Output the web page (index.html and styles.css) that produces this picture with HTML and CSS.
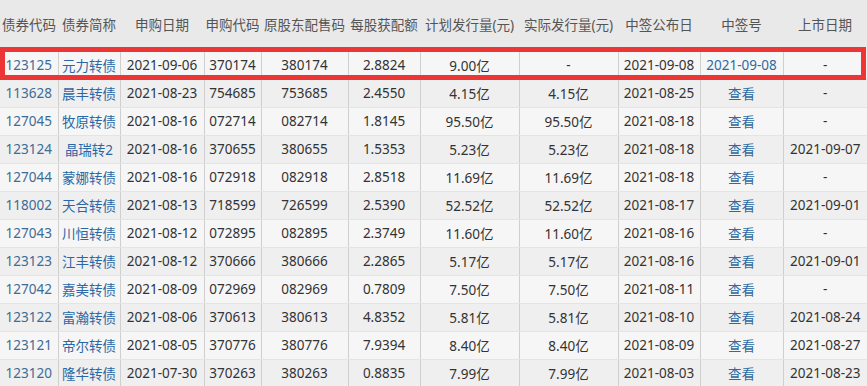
FILE: index.html
```html
<!DOCTYPE html>
<html lang="zh">
<head>
<meta charset="utf-8">
<title>可转债申购</title>
<link rel="stylesheet" href="styles.css">
</head>
<body>
<div class="wrap">
<table class="bonds">
<colgroup>
<col class="c1"><col class="c2"><col class="c3"><col class="c4"><col class="c5"><col class="c6"><col class="c7"><col class="c8"><col class="c9"><col class="c10"><col class="c11">
</colgroup>
<thead>
<tr><th>债券代码</th><th>债券简称</th><th>申购日期</th><th>申购代码</th><th>原股东配售码</th><th>每股获配额</th><th>计划发行量(元)</th><th>实际发行量(元)</th><th>中签公布日</th><th>中签号</th><th>上市日期</th></tr>
</thead>
<tbody>
<tr><td class="code">123125</td><td class="name">元力转债</td><td>2021-09-06</td><td>370174</td><td>380174</td><td>2.8824</td><td>9.00亿</td><td>-</td><td>2021-09-08</td><td class="link">2021-09-08</td><td>-</td></tr>
<tr><td class="code">113628</td><td class="name">晨丰转债</td><td>2021-08-23</td><td>754685</td><td>753685</td><td>2.4550</td><td>4.15亿</td><td>4.15亿</td><td>2021-08-25</td><td class="link">查看</td><td>-</td></tr>
<tr><td class="code">127045</td><td class="name">牧原转债</td><td>2021-08-16</td><td>072714</td><td>082714</td><td>1.8145</td><td>95.50亿</td><td>95.50亿</td><td>2021-08-18</td><td class="link">查看</td><td>-</td></tr>
<tr><td class="code">123124</td><td class="name">晶瑞转2</td><td>2021-08-16</td><td>370655</td><td>380655</td><td>1.5353</td><td>5.23亿</td><td>5.23亿</td><td>2021-08-18</td><td class="link">查看</td><td>2021-09-07</td></tr>
<tr><td class="code">127044</td><td class="name">蒙娜转债</td><td>2021-08-16</td><td>072918</td><td>082918</td><td>2.8518</td><td>11.69亿</td><td>11.69亿</td><td>2021-08-18</td><td class="link">查看</td><td>-</td></tr>
<tr><td class="code">118002</td><td class="name">天合转债</td><td>2021-08-13</td><td>718599</td><td>726599</td><td>2.5390</td><td>52.52亿</td><td>52.52亿</td><td>2021-08-17</td><td class="link">查看</td><td>2021-09-01</td></tr>
<tr><td class="code">127043</td><td class="name">川恒转债</td><td>2021-08-12</td><td>072895</td><td>082895</td><td>2.3749</td><td>11.60亿</td><td>11.60亿</td><td>2021-08-16</td><td class="link">查看</td><td>-</td></tr>
<tr><td class="code">123123</td><td class="name">江丰转债</td><td>2021-08-12</td><td>370666</td><td>380666</td><td>2.2865</td><td>5.17亿</td><td>5.17亿</td><td>2021-08-16</td><td class="link">查看</td><td>2021-09-01</td></tr>
<tr><td class="code">127042</td><td class="name">嘉美转债</td><td>2021-08-09</td><td>072969</td><td>082969</td><td>0.7809</td><td>7.50亿</td><td>7.50亿</td><td>2021-08-11</td><td class="link">查看</td><td>-</td></tr>
<tr><td class="code">123122</td><td class="name">富瀚转债</td><td>2021-08-06</td><td>370613</td><td>380613</td><td>4.8352</td><td>5.81亿</td><td>5.81亿</td><td>2021-08-10</td><td class="link">查看</td><td>2021-08-24</td></tr>
<tr><td class="code">123121</td><td class="name">帝尔转债</td><td>2021-08-05</td><td>370776</td><td>380776</td><td>7.9394</td><td>8.40亿</td><td>8.40亿</td><td>2021-08-09</td><td class="link">查看</td><td>2021-08-27</td></tr>
<tr><td class="code">123120</td><td class="name">隆华转债</td><td>2021-07-30</td><td>370263</td><td>380263</td><td>0.8835</td><td>7.99亿</td><td>7.99亿</td><td>2021-08-03</td><td class="link">查看</td><td>2021-08-23</td></tr>
</tbody>
</table>
<div class="highlight"></div>
</div>
</body>
</html>
```

FILE: styles.css
```css
html, body {
  margin: 0;
  padding: 0;
  background: #f2f2f2;
  overflow: hidden;
}
.wrap {
  position: relative;
  width: 867px;
  height: 386px;
  overflow: hidden;
}
.bonds {
  width: 867px;
  border-collapse: collapse;
  table-layout: fixed;
  font-family: "Noto Sans", "Noto Sans CJK SC", sans-serif;
  font-size: 13.5px;
  color: #333;
}
.c1 { width: 58px; }
.c2 { width: 62px; }
.c3 { width: 84px; }
.c4 { width: 57px; }
.c5 { width: 87px; }
.c6 { width: 72px; }
.c7 { width: 99px; }
.c8 { width: 99px; }
.c9 { width: 82px; }
.c10 { width: 83px; }
.c11 { width: 84px; }
.bonds th {
  height: 51px;
  padding: 0 0 3px 0;
  background: #e9e9e9;
  color: #555;
  font-weight: normal;
  text-align: center;
  white-space: nowrap;
  box-sizing: border-box;
}
.bonds td {
  height: 28px;
  padding: 0;
  text-align: center;
  white-space: nowrap;
  border-left: 1px solid #cfcfcf;
  border-bottom: 1px solid #e4e4e4;
  box-sizing: border-box;
}
.bonds td:first-child { border-left: none; }
.bonds tbody tr:nth-child(odd) td { background: #f6f6f6; }
.bonds tbody tr:nth-child(even) td { background: #efefef; }
.bonds td.code { color: #3d6c95; }
.bonds td.name { color: #2b67a6; }
.bonds td.link { color: #2d6aa3; }
.highlight {
  position: absolute;
  left: 0;
  top: 47px;
  width: 866px;
  height: 33px;
  border: 5px solid #ec3535;
  box-sizing: border-box;
}
```
